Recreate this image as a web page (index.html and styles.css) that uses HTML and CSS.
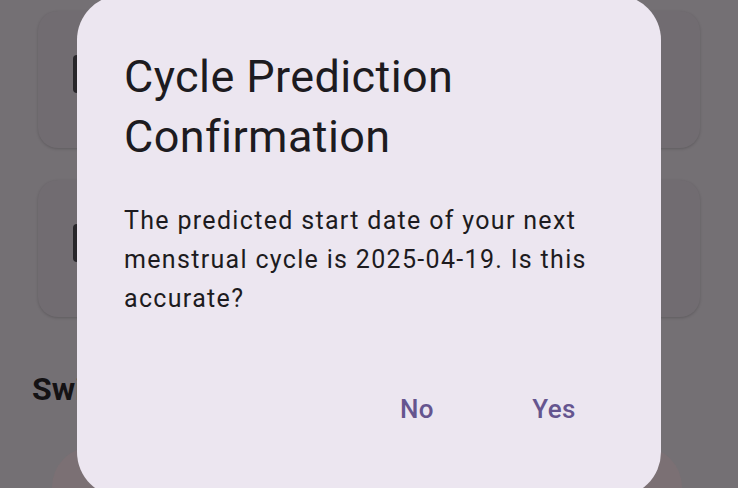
FILE: index.html
```html
<!DOCTYPE html>
<html>
<head>
<meta charset="utf-8">
<link rel="stylesheet" href="styles.css">
</head>
<body>
<div class="page">
  <div class="card"><span class="icon"></span></div>
  <div class="card card2"><span class="icon"></span></div>
  <div class="section">Swipe</div>
  <div class="bottom-card"></div>
</div>
<div class="dialog">
  <h1 class="title">Cycle Prediction Confirmation</h1>
  <p class="body">The predicted start date of your next menstrual cycle is 2025-04-19. Is this accurate?</p>
  <div class="actions">
    <button class="btn">No</button>
    <button class="btn">Yes</button>
  </div>
</div>
</body>
</html>
```

FILE: styles.css
```css
html, body {
  margin: 0;
  padding: 0;
  width: 738px;
  height: 488px;
  overflow: hidden;
  background: #747074;
  font-family: Roboto, "Noto Sans", sans-serif;
}
.page {
  display: flex;
  flex-direction: column;
  padding: 11px 38px 0 38px;
}
.card {
  height: 137px;
  border-radius: 20px;
  background: #716c71;
  box-shadow: 0 1px 3px rgba(0,0,0,0.18);
  display: flex;
  align-items: center;
  padding-left: 35px;
}
.card2 {
  margin-top: 32px;
}
.icon {
  width: 10px;
  height: 38px;
  background: #28262a;
  border-radius: 4px;
  margin-top: -12px;
}
.section {
  margin: 54px 0 0 -6px;
  font-size: 32px;
  font-weight: 700;
  color: #141214;
  line-height: 36px;
}
.bottom-card {
  margin: 40px 18px 0 14px;
  height: 80px;
  border-radius: 40px;
  background: #7b7074;
}
.dialog {
  position: absolute;
  left: 77px;
  top: -5px;
  width: 584px;
  height: 502px;
  box-sizing: border-box;
  border-radius: 45px;
  background: #ece6f0;
  padding: 52px 36px 0 47px;
}
.title {
  margin: 0;
  font-size: 45px;
  font-weight: 400;
  line-height: 60px;
  letter-spacing: 0.4px;
  color: #1d1b20;
}
.body {
  margin: 34px 0 0 0;
  font-size: 25px;
  line-height: 39px;
  color: #1d1b20;
  letter-spacing: 1.32px;
}
.actions {
  display: flex;
  justify-content: flex-end;
  gap: 98px;
  margin-top: 76px;
  padding-right: 49px;
}
.btn {
  border: none;
  background: none;
  padding: 0;
  font-family: Roboto, sans-serif;
  font-size: 26px;
  font-weight: 500;
  color: #65558f;
  line-height: 30px;
  letter-spacing: 0.5px;
}
```
